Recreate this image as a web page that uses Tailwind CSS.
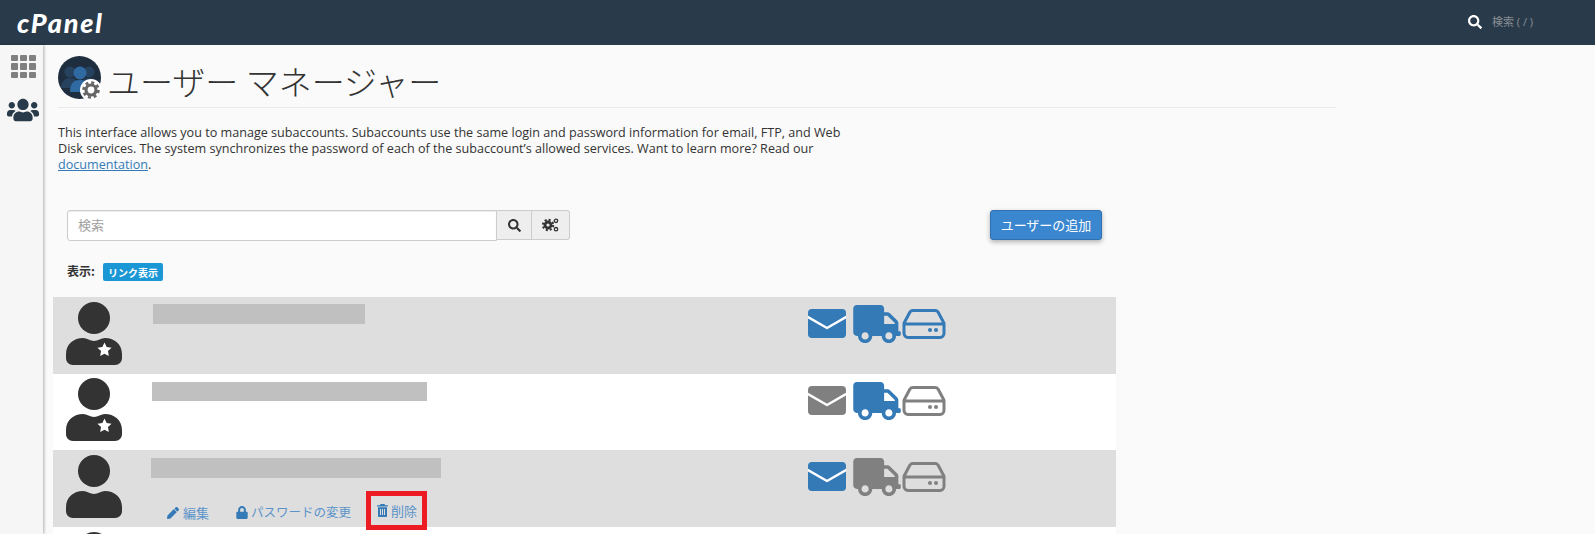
<!DOCTYPE html>
<html lang="ja">
<head>
<meta charset="utf-8">
<script src="https://cdn.jsdelivr.net/npm/@tailwindcss/browser@4"></script>
<title>ユーザー マネージャー</title>
</head>
<body class="w-[1595px] h-[534px] overflow-hidden bg-[#fafafa] font-['Open_Sans','Noto_Sans_CJK_JP',sans-serif] text-[#333]">
<svg class="hidden">
  <symbol id="avatar" viewBox="0 0 56 63"><circle cx="28" cy="16" r="16"/><path d="M0 52C0 42 8 36 17 36c4 0 7 3 11 3s7-3 11-3c9 0 17 6 17 16v4c0 4-3 7-7 7H7c-4 0-7-3-7-7z"/></symbol>
  <symbol id="star" viewBox="0 0 16 16"><path d="M8 .6l2.300 4.800 5.200.7-3.800 3.600.9 5.200L8 12.400l-4.600 2.500.9-5.200L.5 6.100l5.200-.7z" fill="#fff"/></symbol>
  <symbol id="mail" viewBox="0 0 38 29"><rect width="38" height="29" rx="4"/><path d="M0 8l19 11L38 8" fill="none" stroke="#fff" stroke-width="2.400" stroke-linecap="round" stroke-linejoin="round"/></symbol>
  <symbol id="truck" viewBox="0 0 640 512"><path d="M624 352h-16V243.900c0-12.700-5.100-24.900-14.100-33.900L494 110.100c-9-9-21.200-14.100-33.900-14.100H416V48c0-26.500-21.500-48-48-48H48C21.500 0 0 21.500 0 48v320c0 26.500 21.500 48 48 48h16c0 53 43 96 96 96s96-43 96-96h128c0 53 43 96 96 96s96-43 96-96h48c8.800 0 16-7.200 16-16v-32c0-8.800-7.200-16-16-16zM160 464c-26.500 0-48-21.500-48-48s21.500-48 48-48 48 21.500 48 48-21.500 48-48 48zm320 0c-26.500 0-48-21.500-48-48s21.500-48 48-48 48 21.500 48 48-21.500 48-48 48zm80-208H416V144h44.100l99.900 99.900V256z"/></symbol>
  <symbol id="hdd" viewBox="0 0 44 30"><path d="M11 1.500h22c1.500 0 2.500.7 3.200 1.800l5.800 11v10c0 2.300-1.700 4.200-4 4.200H6c-2.300 0-4-1.900-4-4.200v-10l5.800-11C8.500 2.200 9.500 1.500 11 1.500zM2 15h40" fill="none" stroke="currentColor" stroke-width="3" stroke-linejoin="round"/><circle cx="28" cy="21" r="2" fill="currentColor"/><circle cx="34" cy="21" r="2" fill="currentColor"/></symbol>
</svg>

<header class="h-[45px] bg-[#293a4a] flex items-center justify-between">
  <span class="ml-[17px] text-white text-[27px] leading-none font-black italic tracking-[1.800px] font-['Lato',sans-serif]">cPanel</span>
  <div class="flex items-center w-[134px] mb-[1px]">
    <svg class="w-[14px] h-[14px] ml-[7px] fill-white" viewBox="0 0 512 512"><path d="M505 442.700L405.300 343c-4.500-4.500-10.600-7-17-7H372c27.600-35.300 44-79.700 44-128C416 93.100 322.900 0 208 0S0 93.100 0 208s93.100 208 208 208c48.300 0 92.700-16.400 128-44v16.300c0 6.400 2.500 12.500 7 17l99.700 99.700c9.400 9.400 24.600 9.400 33.900 0l28.300-28.300c9.400-9.400 9.400-24.600.1-34zM208 336c-70.700 0-128-57.200-128-128 0-70.700 57.200-128 128-128 70.700 0 128 57.200 128 128 0 70.700-57.200 128-128 128z"/></svg>
    <span class="ml-[10px] text-[11px] text-[#8a8f95]">検索 ( / )</span>
  </div>
</header>

<div class="flex h-[489px]">
  <aside class="w-[43px] shrink-0 bg-[#f6f6f6] shadow-[1px_0_3px_rgba(0,0,0,0.3)] flex flex-col items-center z-10">
    <div class="mt-[10px] ml-[3px] grid grid-cols-3 gap-[2px] w-[25px] h-[23px]">
      <i class="bg-[#808080] rounded-[1px]"></i><i class="bg-[#808080] rounded-[1px]"></i><i class="bg-[#808080] rounded-[1px]"></i>
      <i class="bg-[#808080] rounded-[1px]"></i><i class="bg-[#808080] rounded-[1px]"></i><i class="bg-[#808080] rounded-[1px]"></i>
      <i class="bg-[#808080] rounded-[1px]"></i><i class="bg-[#808080] rounded-[1px]"></i><i class="bg-[#808080] rounded-[1px]"></i>
    </div>
    <svg class="mt-[19px] ml-[3px] w-[32px] h-[26px] fill-[#293a4a]" viewBox="0 0 640 512"><path d="M96 224c35.300 0 64-28.700 64-64s-28.700-64-64-64-64 28.700-64 64 28.700 64 64 64zm448 0c35.300 0 64-28.700 64-64s-28.700-64-64-64-64 28.700-64 64 28.700 64 64 64zm32 32h-64c-17.600 0-33.500 7.100-45.100 18.600 40.300 22.100 68.900 62 75.100 109.400h66c17.700 0 32-14.300 32-32v-32c0-35.300-28.700-64-64-64zm-256 0c61.900 0 112-50.100 112-112S381.900 32 320 32 208 82.100 208 144s50.100 112 112 112zm76.800 32h-8.300c-20.800 10-43.900 16-68.500 16s-47.600-6-68.500-16h-8.300C179.600 288 128 339.600 128 403.200V432c0 26.500 21.500 48 48 48h288c26.500 0 48-21.500 48-48v-28.800c0-63.600-51.600-115.200-115.200-115.200zm-223.700-13.400C161.500 263.100 145.600 256 128 256H64c-35.300 0-64 28.700-64 64v32c0 17.700 14.300 32 32 32h65.900c6.300-47.400 34.900-87.300 75.200-109.400z"/></svg>
  </aside>

  <main class="flex-1 relative">
    <div class="ml-[15px] w-[1278px] h-[63px] border-b border-[#eaeaea] flex items-start">
      <svg class="mt-[11px] w-[46px] h-[45px] shrink-0" viewBox="0 0 46 45">
        <circle cx="21.500" cy="21.500" r="21.500" fill="#1e2e3e"/>
        <circle cx="12" cy="16" r="5.500" fill="#26425f"/><path d="M3 32c0-7 4-10 9-10s9 3 9 10z" fill="#26425f"/>
        <circle cx="31" cy="16" r="5.500" fill="#26425f"/><path d="M22 32c0-7 4-10 9-10s9 3 9 10z" fill="#26425f"/>
        <circle cx="22" cy="17" r="6.500" fill="#2f6aa3"/><path d="M12 36c0-9 4-12 10-12s10 3 10 12z" fill="#2f6aa3"/>
        <circle cx="33" cy="34" r="11" fill="#fff"/>
        <circle cx="33" cy="34" r="5" fill="none" stroke="#666" stroke-width="3.200"/>
        <circle cx="33" cy="34" r="7.500" fill="none" stroke="#666" stroke-width="2.600" stroke-dasharray="3 2.890"/>
      </svg>
      <h1 class="ml-[3px] mt-[14px] text-[33px] leading-[44px] font-light text-[#333] font-['Noto_Sans_CJK_JP',sans-serif] whitespace-nowrap">ユーザー マネージャー</h1>
    </div>

    <p class="ml-[15px] mt-[17px] w-[785px] text-[12.600px] leading-[16px] text-[#333]">This interface allows you to manage subaccounts. Subaccounts use the same login and password information for email, FTP, and Web Disk services. The system synchronizes the password of each of the subaccount’s allowed services. Want to learn more? Read our <a class="text-[#337ab7] underline">documentation</a>.</p>

    <div class="ml-[24px] mt-[37px] w-[1035px] flex items-start justify-between">
      <div class="flex">
        <div class="w-[430px] h-[31px] bg-white border border-[#ccc] rounded-l-[3px] flex items-center pl-[10px] text-[13px] text-[#a0a0a0] shadow-[inset_0_1px_1px_rgba(0,0,0,0.08)]">検索</div>
        <div class="w-[35px] h-[30px] bg-[#eee] border-y border-r border-[#ccc] flex items-center justify-center">
          <svg class="w-[13px] h-[13px] fill-[#333]" viewBox="0 0 512 512"><path d="M505 442.700L405.300 343c-4.500-4.500-10.600-7-17-7H372c27.600-35.300 44-79.700 44-128C416 93.100 322.900 0 208 0S0 93.100 0 208s93.100 208 208 208c48.300 0 92.700-16.400 128-44v16.300c0 6.400 2.500 12.500 7 17l99.700 99.700c9.400 9.400 24.600 9.400 33.900 0l28.300-28.300c9.400-9.400 9.400-24.600.1-34zM208 336c-70.700 0-128-57.200-128-128 0-70.700 57.200-128 128-128 70.700 0 128 57.200 128 128 0 70.700-57.200 128-128 128z"/></svg>
        </div>
        <div class="w-[38px] h-[30px] bg-[#eee] border-y border-r border-[#ccc] rounded-r-[3px] flex items-center justify-center">
          <svg class="w-[17px] h-[14px]" viewBox="0 0 17 14">
            <circle cx="6" cy="7" r="3" fill="none" stroke="#333" stroke-width="2.800"/>
            <circle cx="6" cy="7" r="5.200" fill="none" stroke="#333" stroke-width="2" stroke-dasharray="2.100 1.980"/>
            <circle cx="14" cy="2.800" r="1.700" fill="none" stroke="#333" stroke-width="1.300"/>
            <circle cx="14" cy="11.200" r="1.700" fill="none" stroke="#333" stroke-width="1.300"/>
          </svg>
        </div>
      </div>
      <button class="w-[112px] h-[30px] bg-[#3a86cf] border border-[#2f71b0] rounded-[3px] text-white text-[13px] shadow-[0_2px_5px_rgba(0,0,0,0.3)] font-['Noto_Sans_CJK_JP',sans-serif]">ユーザーの追加</button>
    </div>

    <div class="ml-[24px] mt-[22px] h-[18px] flex items-center">
      <span class="text-[12px] font-bold text-[#333] font-['Noto_Sans_CJK_JP',sans-serif] mb-[3px]">表示:</span>
      <span class="ml-[8px] w-[60px] h-[18px] rounded-[2px] bg-[#1b97d5] text-white text-[10px] font-bold flex items-center justify-center font-['Noto_Sans_CJK_JP',sans-serif]">リンク表示</span>
    </div>

    <section class="ml-[10px] mt-[16px] w-[1063px]">
      <div class="h-[77px] bg-[#dedede] flex">
        <div class="relative ml-[13px] mt-[5px] w-[56px] h-[63px]">
          <svg class="w-[56px] h-[63px] fill-[#333]"><use href="#avatar"/></svg>
          <svg class="absolute left-[31px] top-[40px] w-[15px] h-[15px]"><use href="#star"/></svg>
        </div>
        <div class="ml-[31px] mt-[7px] w-[212px] h-[20px] bg-[#c0c0c0]"></div>
        <div class="ml-[443px] flex items-start">
          <svg class="mt-[12px] w-[38px] h-[29px] fill-[#337ab7]"><use href="#mail"/></svg>
          <svg class="mt-[8px] ml-[7px] w-[48px] h-[38px] fill-[#337ab7]"><use href="#truck"/></svg>
          <svg class="mt-[12px] ml-[1px] w-[44px] h-[30px] text-[#337ab7]"><use href="#hdd"/></svg>
        </div>
      </div>

      <div class="h-[76px] bg-white flex">
        <div class="relative ml-[13px] mt-[4px] w-[56px] h-[63px]">
          <svg class="w-[56px] h-[63px] fill-[#333]"><use href="#avatar"/></svg>
          <svg class="absolute left-[31px] top-[40px] w-[15px] h-[15px]"><use href="#star"/></svg>
        </div>
        <div class="ml-[30px] mt-[8px] w-[275px] h-[19px] bg-[#c0c0c0]"></div>
        <div class="ml-[381px] flex items-start">
          <svg class="mt-[12px] w-[38px] h-[29px] fill-[#808080]"><use href="#mail"/></svg>
          <svg class="mt-[8px] ml-[7px] w-[48px] h-[38px] fill-[#337ab7]"><use href="#truck"/></svg>
          <svg class="mt-[12px] ml-[1px] w-[44px] h-[30px] text-[#808080]"><use href="#hdd"/></svg>
        </div>
      </div>

      <div class="h-[77px] bg-[#dedede] flex">
        <div class="ml-[13px] mt-[5px] w-[56px] h-[63px]">
          <svg class="w-[56px] h-[63px] fill-[#333]"><use href="#avatar"/></svg>
        </div>
        <div class="ml-[29px] w-[386px] relative">
          <div class="mt-[8px] w-[290px] h-[20px] bg-[#c0c0c0]"></div>
          <div class="mt-[20px] ml-[16px] flex items-center h-[29px] text-[13px] text-[#5a93c9] font-['Noto_Sans_CJK_JP',sans-serif] whitespace-nowrap">
            <svg class="w-[12px] h-[12px] fill-[#337ab7]" viewBox="0 0 512 512"><path d="M497.900 142.100l-46.100 46.100c-4.700 4.700-12.300 4.700-17 0l-111-111c-4.700-4.700-4.700-12.300 0-17l46.100-46.100c18.700-18.700 49.100-18.700 67.900 0l60.100 60.100c18.800 18.700 18.800 49.100 0 67.900zM284.200 99.800L21.600 362.400.4 483.900c-2.900 16.400 11.400 30.600 27.800 27.800l121.500-21.300 262.600-262.600c4.700-4.700 4.700-12.300 0-17l-111-111c-4.800-4.700-12.400-4.700-17.100 0z"/></svg>
            <span class="ml-[4px]">編集</span>
            <svg class="ml-[27px] w-[12px] h-[13px] fill-[#337ab7]" viewBox="0 0 448 512"><path d="M400 224h-24v-72C376 68.200 307.800 0 224 0S72 68.200 72 152v72H48c-26.500 0-48 21.500-48 48v192c0 26.500 21.500 48 48 48h352c26.500 0 48-21.500 48-48V272c0-26.500-21.500-48-48-48zm-104 0H152v-72c0-39.700 32.300-72 72-72s72 32.300 72 72v72z"/></svg>
            <span class="ml-[3px] text-[12.500px]">パスワードの変更</span>
          </div>
          <div class="absolute left-[215px] top-[41px] w-[61px] h-[39px] border-[5px] border-[#ed1c24] flex items-center pl-[6px] text-[13px] text-[#5a93c9] font-['Noto_Sans_CJK_JP',sans-serif] z-10 whitespace-nowrap">
            <svg class="w-[11px] h-[13px] fill-[#337ab7] shrink-0" viewBox="0 0 11 13"><path d="M3.500 0h4l.5 1.200h3V2.500H0V1.200h3zM1 3.300h9V12c0 .6-.4 1-1 1H2c-.6 0-1-.4-1-1zM3 5v6h1V5zm2 0v6h1V5zm2 0v6h1V5z" fill-rule="evenodd"/></svg>
            <span class="ml-[3px]">削除</span>
          </div>
        </div>
        <div class="ml-[271px] flex items-start">
          <svg class="mt-[12px] w-[38px] h-[29px] fill-[#337ab7]"><use href="#mail"/></svg>
          <svg class="mt-[8px] ml-[7px] w-[48px] h-[38px] fill-[#808080]"><use href="#truck"/></svg>
          <svg class="mt-[12px] ml-[1px] w-[44px] h-[30px] text-[#808080]"><use href="#hdd"/></svg>
        </div>
      </div>

      <div class="h-[20px] bg-white overflow-hidden">
        <svg class="ml-[13px] mt-[5px] w-[56px] h-[63px] fill-[#333]"><use href="#avatar"/></svg>
      </div>
    </section>
  </main>
</div>
</body>
</html>
